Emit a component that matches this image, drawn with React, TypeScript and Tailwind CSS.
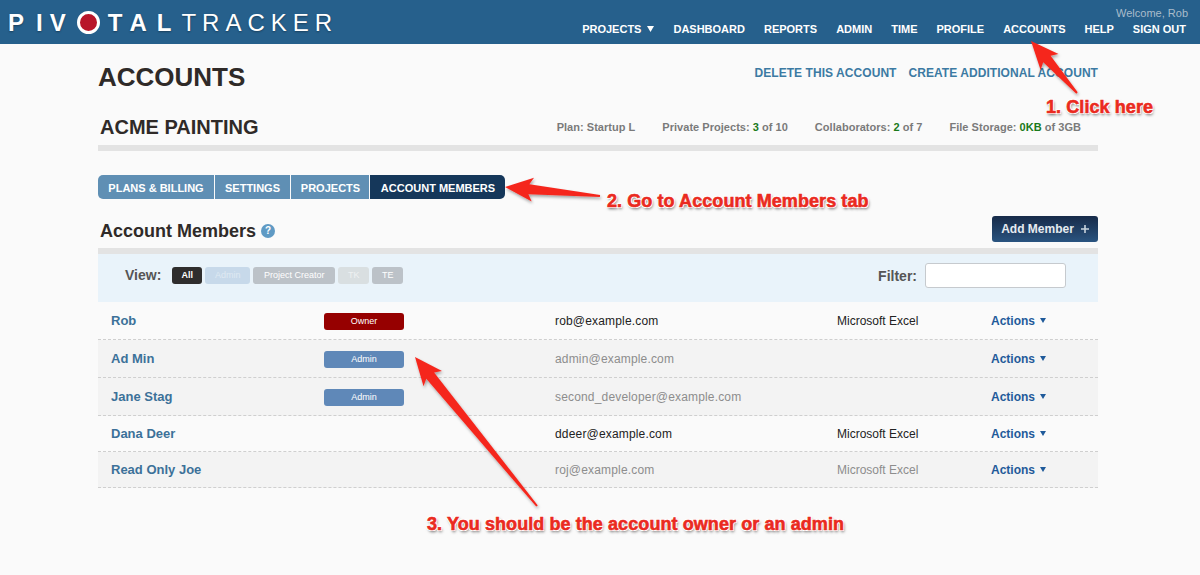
const navItems = ["DASHBOARD", "REPORTS", "ADMIN", "TIME", "PROFILE", "ACCOUNTS", "HELP", "SIGN OUT"];

const members = [
  { name: "Rob", role: "Owner", email: "rob@example.com", app: "Microsoft Excel", active: true, h: "h-[38px]", alt: false },
  { name: "Ad Min", role: "Admin", email: "admin@example.com", app: "", active: false, h: "h-[38px]", alt: true },
  { name: "Jane Stag", role: "Admin", email: "second_developer@example.com", app: "", active: false, h: "h-[38px]", alt: true },
  { name: "Dana Deer", role: "", email: "ddeer@example.com", app: "Microsoft Excel", active: true, h: "h-[36px]", alt: false },
  { name: "Read Only Joe", role: "", email: "roj@example.com", app: "Microsoft Excel", active: false, h: "h-[36px]", alt: true },
];

const arrows = [
  [1077, 93, 1031, 41],
  [600, 196, 505, 187],
  [537, 506, 415, 357],
];

// tapered red arrow from tail to tip
function arrowPoints(x1: number, y1: number, x2: number, y2: number) {
  const len = Math.hypot(x2 - x1, y2 - y1);
  const ux = (x2 - x1) / len;
  const uy = (y2 - y1) / len;
  const nx = -uy;
  const ny = ux;
  const bx = x2 - ux * 24;
  const by = y2 - uy * 24;
  const p = (x: number, y: number) => `${x.toFixed(1)},${y.toFixed(1)}`;
  return [
    p(x1 + nx, y1 + ny),
    p(bx + nx * 5, by + ny * 5),
    p(bx - ux * 4 + nx * 12, by - uy * 4 + ny * 12),
    p(x2, y2),
    p(bx - ux * 4 - nx * 12, by - uy * 4 - ny * 12),
    p(bx - nx * 5, by - ny * 5),
    p(x1 - nx, y1 - ny),
  ].join(" ");
}

function Note({ children, className }: { children: string; className: string }) {
  return (
    <div
      className={`absolute whitespace-nowrap text-[18px] leading-5 font-bold tracking-[0.08px] text-[#ea2a20] [-webkit-text-stroke:0.6px_#ea2a20] [text-shadow:-1px_-1px_0_#fff,1px_-1px_0_#fff,-1px_1px_0_#fff,1px_1px_0_#fff,1px_2px_3px_rgba(0,0,0,0.6)] ${className}`}
    >
      {children}
    </div>
  );
}

export default function App() {
  return (
    <div className="relative h-[575px] overflow-hidden bg-[#fafafa] font-['Liberation_Sans',Arial,sans-serif] text-[#2f2a28]">
      <header className="flex h-[44px] items-start justify-between bg-[#26608c]">
        <div className="flex items-center pl-[8px] pt-[11px] text-[24px] leading-[22px] text-white [text-shadow:0_1px_2px_rgba(0,0,0,0.35)]">
          <span className="mr-[12px] font-bold">P</span>
          <span className="mr-[7px] font-bold">I</span>
          <span className="mr-[11px] font-bold">V</span>
          <span className="mr-[8px] h-[23px] w-[23px] rounded-full border-[3px] border-white bg-[#b8152a]" />
          <span className="mr-[7px] font-bold">T</span>
          <span className="mr-[10px] font-bold">A</span>
          <span className="mr-[10px] font-bold">L</span>
          <span className="tracking-[6px]">TRACKER</span>
        </div>
        <div className="flex flex-col items-end pr-[12px] pt-[6px]">
          <div className="text-[11px] leading-[14px] text-[#a9bccb]">Welcome, Rob</div>
          <nav className="mt-[2px] mr-[2px] flex gap-[19px] text-[11px] leading-[14px] font-bold text-white">
            <span className="flex items-center gap-[6px]">
              PROJECTS
              <svg width="7" height="6" viewBox="0 0 7 6">
                <path d="M0 0h7L3.5 6z" fill="#fff" />
              </svg>
            </span>
            {navItems.map((item) => (
              <span key={item}>{item}</span>
            ))}
          </nav>
        </div>
      </header>

      <main className="ml-[98px] w-[1000px]">
        <div className="flex items-start justify-between pt-[17px]">
          <h1 className="text-[26px] leading-[32px] font-bold">ACCOUNTS</h1>
          <div className="flex gap-[12px] pt-[4px] text-[12px] leading-[16px] font-bold tracking-[0.06px] text-[#3c7aa3]">
            <span>DELETE THIS ACCOUNT</span>
            <span>CREATE ADDITIONAL ACCOUNT</span>
          </div>
        </div>

        <div className="mt-[14px] box-content flex h-[38px] items-start justify-between border-b-[6px] border-[#e3e3e3] pr-[17px]">
          <h2 className="pt-[7px] pl-[2px] text-[20px] leading-[26px] font-bold">ACME PAINTING</h2>
          <div className="flex gap-[27px] pt-[13px] text-[11px] leading-[14px] font-bold tracking-[0.03px] text-[#7a7a7a]">
            <span>Plan: Startup L</span>
            <span>
              Private Projects: <span className="text-[#1a7a1a]">3</span> of 10
            </span>
            <span>
              Collaborators: <span className="text-[#1a7a1a]">2</span> of 7
            </span>
            <span>
              File Storage: <span className="text-[#1a7a1a]">0KB</span> of 3GB
            </span>
          </div>
        </div>

        <div className="mt-[24px] flex h-[24px] w-[407px] gap-px text-[11px] leading-[26px] font-bold text-white">
          <div className="w-[116px] rounded-l-[5px] bg-[#5f8fb4] text-center">PLANS &amp; BILLING</div>
          <div className="w-[75px] bg-[#5f8fb4] text-center">SETTINGS</div>
          <div className="w-[78px] bg-[#5f8fb4] pl-px text-center">PROJECTS</div>
          <div className="w-[135px] rounded-r-[5px] bg-[#15375a] pl-px text-center">ACCOUNT MEMBERS</div>
        </div>

        <div className="mt-[17px] flex h-[26px] items-center justify-between">
          <div className="flex items-center gap-[5px] pt-[3px] pl-[2px]">
            <h3 className="text-[18px] leading-[26px] font-bold">Account Members</h3>
            <span className="flex h-[14px] w-[14px] items-center justify-center rounded-full bg-[#5f9ac4] text-[10px] font-bold text-white">?</span>
          </div>
          <button className="flex h-[26px] w-[106px] items-center justify-center gap-[7px] rounded-[3px] bg-gradient-to-b from-[#172b49] to-[#2a5480] text-[12px] font-bold text-[#e6ebf0]">
            Add Member
            <svg width="8" height="8" viewBox="0 0 8 8">
              <path d="M0 4h8M4 0v8" stroke="#c9d3dd" strokeWidth="1.6" />
            </svg>
          </button>
        </div>

        <div className="mt-[6px] border-t-[6px] border-[#e3e3e3] bg-[#e9f3fa]">
          <div className="flex h-[48px] items-start justify-between pr-[32px] pl-[27px] pt-[9px]">
            <div className="flex items-center pt-[4px]">
              <span className="mr-[11px] text-[14px] leading-[17px] font-bold text-[#555]">View:</span>
              <div className="flex gap-[3px] text-[9px] leading-[17px] text-white">
                <span className="w-[30px] rounded-[3px] bg-[#2f2d2d] text-center font-bold">All</span>
                <span className="w-[45px] rounded-[3px] bg-[#c7d9ea] text-center text-[#dfe9f2]">Admin</span>
                <span className="w-[82px] rounded-[3px] bg-[#bcc2c8] text-center">Project Creator</span>
                <span className="w-[31px] rounded-[3px] bg-[#d9dfe1] text-center text-[#eef1f2]">TK</span>
                <span className="w-[31px] rounded-[3px] bg-[#bcc2c8] text-center">TE</span>
              </div>
            </div>
            <div className="flex items-center gap-[8px]">
              <span className="pt-px text-[14px] font-bold text-[#555]">Filter:</span>
              <input className="h-[25px] w-[141px] rounded-[3px] border border-[#c6cace] bg-white" />
            </div>
          </div>
        </div>

        {members.map((m) => (
          <div
            key={m.name}
            className={`grid ${m.h} grid-cols-[213px_231px_282px_154px_1fr] items-center border-b border-dashed border-[#cfcfcf] pl-[13px] text-[12px] ${m.alt ? "bg-[#f3f3f3]" : ""}`}
          >
            <span className="text-[13px] font-bold text-[#3c7199]">{m.name}</span>
            <span>
              {m.role && (
                <span
                  className={`mt-px block h-[17px] w-[80px] rounded-[3px] text-center text-[9px] leading-[17px] text-white ${m.role === "Owner" ? "bg-[#960000]" : "bg-[#5f88b8]"}`}
                >
                  {m.role}
                </span>
              )}
            </span>
            <span className={`tracking-[0.17px] ${m.active ? "text-[#222]" : "text-[#8d8d8d]"}`}>{m.email}</span>
            <span className={m.active ? "text-[#222]" : "text-[#8d8d8d]"}>{m.app}</span>
            <span className="flex items-center gap-[5px] font-bold text-[#1f5a9a]">
              Actions
              <svg width="6" height="5" viewBox="0 0 6 5">
                <path d="M0 0h6L3 5z" fill="#1f5a9a" />
              </svg>
            </span>
          </div>
        ))}
      </main>

      <svg className="absolute top-0 left-0 h-[575px] w-[1200px]" viewBox="0 0 1200 575">
        <defs>
          <filter id="arrow-shadow" x="-20%" y="-20%" width="140%" height="140%">
            <feDropShadow dx="1" dy="2" stdDeviation="1.5" floodColor="#000" floodOpacity="0.35" />
          </filter>
        </defs>
        {arrows.map(([x1, y1, x2, y2]) => (
          <polygon key={x1} points={arrowPoints(x1, y1, x2, y2)} fill="#f5281f" filter="url(#arrow-shadow)" />
        ))}
      </svg>

      <Note className="top-[97px] left-[1046px]">1. Click here</Note>
      <Note className="top-[191px] left-[607px]">2. Go to Account Members tab</Note>
      <Note className="top-[514px] left-[427px]">3. You should be the account owner or an admin</Note>
    </div>
  );
}
